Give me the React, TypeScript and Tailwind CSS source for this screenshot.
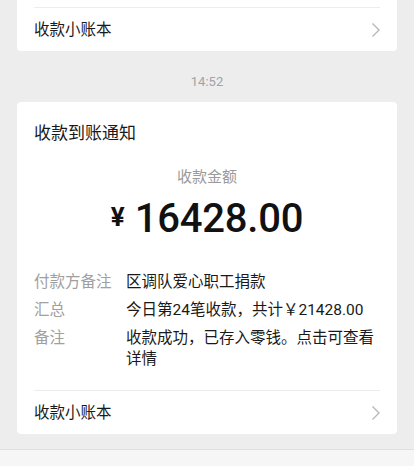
const FONT = "font-['Roboto','Noto_Sans_CJK_SC',sans-serif]"

const DETAILS = [
  { label: '付款方备注', value: '区调队爱心职工捐款' },
  { label: '汇总', value: '今日第24笔收款，共计￥21428.00' },
  { label: '备注', value: '收款成功，已存入零钱。点击可查看详情' },
]

function Arrow() {
  return (
    <svg width="10" height="16" viewBox="0 0 10 16" fill="none" className="mr-[-1px]">
      <path d="M1.5 1.5 8 8l-6.5 6.5" stroke="#b8b8b8" strokeWidth="1.4" strokeLinejoin="miter" />
    </svg>
  )
}

function LedgerRow() {
  return (
    <div className="mx-[17px] flex h-[44px] items-center justify-between border-t border-[#ededed]">
      <span className="text-[15.5px] leading-[22px] text-[#191919]">收款小账本</span>
      <Arrow />
    </div>
  )
}

export default function App() {
  return (
    <div className={`flex h-[466px] w-[414px] flex-col overflow-hidden bg-[#ededed] ${FONT}`}>
      {/* previous message tail */}
      <div className="mx-[17px] shrink-0 rounded-b-[4px] bg-white pt-[7px]">
        <LedgerRow />
      </div>

      <div className="shrink-0 pb-[11px] pt-[22px] text-center text-[13px] leading-[18px] text-[#a3a3a3]">
        14:52
      </div>

      {/* notification card */}
      <div className="mx-[17px] shrink-0 rounded-[4px] bg-white">
        <div className="px-[17px] pt-[20px] text-[17px] leading-[22px] text-[#191919]">收款到账通知</div>

        <div className="mt-[22px] text-center text-[15px] leading-[22px] text-[#9a9a9a]">收款金额</div>

        <div className="mt-[7px] flex h-[48px] items-center justify-center text-[#111]">
          <span className="mr-[10px] mt-[-4px] text-[26px] font-bold leading-none">¥</span>
          <span className="text-[40px] font-medium leading-none tracking-[-0.2px]">16428.00</span>
        </div>

        <div className="mt-[29px] flex flex-col gap-[7px] px-[17px] pb-[20px]">
          {DETAILS.map((d) => (
            <div key={d.label} className="flex text-[15.5px] leading-[21px]">
              <span className="w-[92px] shrink-0 text-[#a0a0a0]">{d.label}</span>
              <span className="min-w-0 flex-1 text-[#191919]">{d.value}</span>
            </div>
          ))}
        </div>

        <LedgerRow />
      </div>

      <div className="mt-[15px] flex-1 border-t border-[#e0e0e0] bg-[#f6f6f6]" />
    </div>
  )
}
